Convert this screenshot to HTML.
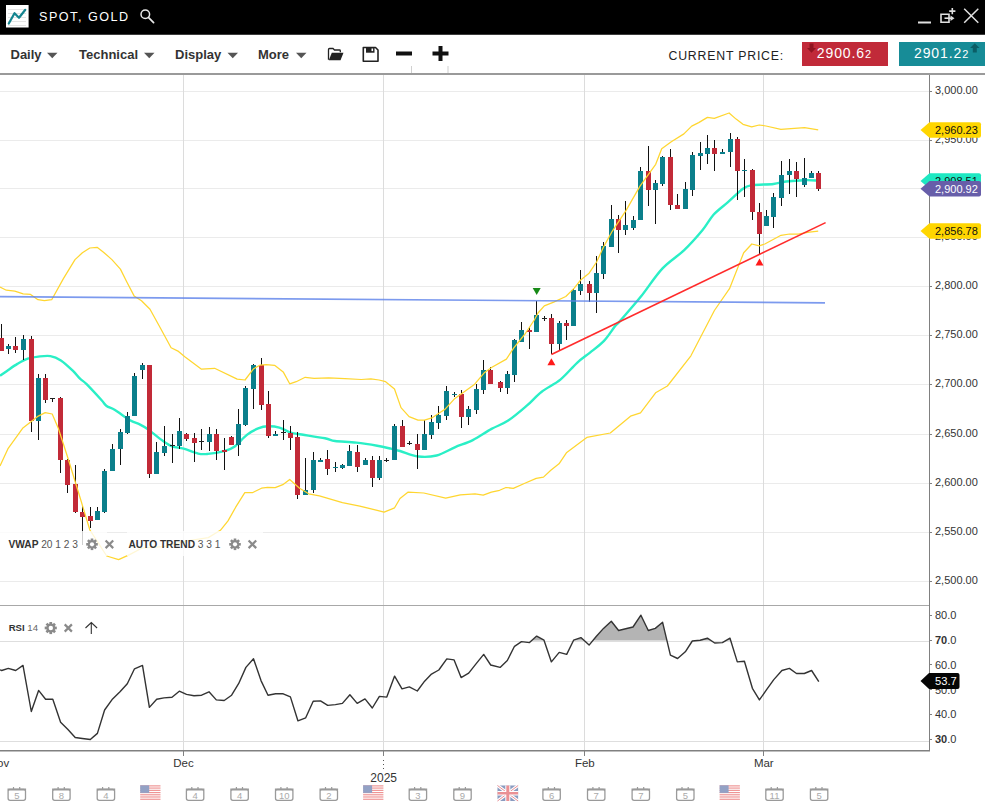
<!DOCTYPE html>
<html><head><meta charset="utf-8">
<style>
html,body{margin:0;padding:0;}
body{width:985px;height:805px;overflow:hidden;background:#fff;position:relative;font-family:"Liberation Sans",sans-serif;}
.abs{position:absolute;}
svg{position:absolute;left:0;top:0;}
</style></head><body>

<svg width="985" height="805" viewBox="0 0 985 805" style="font-family:'Liberation Sans',sans-serif">
<rect x="0" y="0" width="985" height="34" fill="#000"/>
<rect x="0" y="34" width="985" height="1" fill="#3c3c3c"/>
<rect x="6" y="5" width="22.6" height="22.5" fill="#fff"/>
<rect x="8" y="9" width="18" height="1" fill="#e4e4e4"/>
<rect x="8" y="13" width="18" height="1" fill="#e4e4e4"/>
<rect x="8" y="17" width="18" height="1" fill="#e4e4e4"/>
<rect x="8" y="21" width="18" height="1" fill="#e4e4e4"/>
<rect x="8" y="25" width="18" height="1" fill="#e4e4e4"/>
<polyline points="8.8,23.5 14.5,13.2 19,17.8 25.3,9.8" fill="none" stroke="#14848f" stroke-width="2.2" stroke-linecap="round" stroke-linejoin="round"/>
<text x="39" y="21.4" fill="#fff" font-size="12.6" letter-spacing="1.5">SPOT, GOLD</text>
<circle cx="145.3" cy="14.2" r="4.3" fill="none" stroke="#e8e8e8" stroke-width="1.5"/>
<line x1="148.4" y1="17.4" x2="153.6" y2="22.6" stroke="#e8e8e8" stroke-width="1.7" stroke-linecap="round"/>
<rect x="918" y="21.5" width="13" height="2" fill="#e0e0e0"/>
<path d="M941,14.2 H949 V22.3 H941 Z" fill="none" stroke="#e0e0e0" stroke-width="1.6"/>
<path d="M944.5,18.2 H951" stroke="#e0e0e0" stroke-width="1.6"/>
<path d="M950.5,15.5 L954.5,18.2 L950.5,21 Z" fill="#e0e0e0"/>
<path d="M952.3,8 V14.2 M949.2,11.1 H955.4" stroke="#e0e0e0" stroke-width="1.6"/>
<path d="M964.2,8.7 L978.3,22.8 M978.3,8.7 L964.2,22.8" stroke="#e0e0e0" stroke-width="1.5"/>
<rect x="0" y="73" width="985" height="2" fill="#9a9a9a"/>
<text x="10.5" y="59.3" fill="#333" font-size="13" font-weight="bold">Daily</text>
<path d="M47,52.8 H57.5 L52.25,58.2 Z" fill="#555"/>
<text x="79" y="59.3" fill="#333" font-size="13" font-weight="bold">Technical</text>
<path d="M144,52.8 H154.5 L149.25,58.2 Z" fill="#555"/>
<text x="175" y="59.3" fill="#333" font-size="13" font-weight="bold">Display</text>
<path d="M227.5,52.8 H238.0 L232.75,58.2 Z" fill="#555"/>
<text x="258" y="59.3" fill="#333" font-size="13" font-weight="bold">More</text>
<path d="M296,52.8 H306.5 L301.25,58.2 Z" fill="#555"/>
<path d="M328.5,59.8 V49.5 Q328.5,48.5 329.5,48.5 H333 L334.5,50 H339.5 Q340.3,50 340.3,50.8 V52.3" fill="none" stroke="#222" stroke-width="1.3"/>
<path d="M328.8,60.2 L331.8,52.8 H343.5 L340.5,60.2 Z" fill="#222"/>
<path d="M363.3,47.5 H375.5 L378,50 V61.2 H363.3 Z" fill="none" stroke="#222" stroke-width="1.6" stroke-linejoin="round"/>
<rect x="366" y="47.5" width="8.5" height="5.2" fill="#222"/>
<rect x="371.5" y="48.5" width="1.6" height="2.6" fill="#fff"/>
<rect x="396" y="51.5" width="16" height="4" fill="#111"/>
<rect x="432.5" y="51.5" width="16" height="4" fill="#111"/>
<rect x="438.5" y="46" width="4" height="15" fill="#111"/>
<rect x="411" y="66" width="1" height="7" fill="#d0d0d0"/>
<rect x="447.5" y="66" width="1" height="7" fill="#d0d0d0"/>
<text x="668.5" y="59.9" fill="#222" font-size="12.3" letter-spacing="0.8">CURRENT PRICE:</text>
<rect x="802" y="42" width="86" height="24" fill="#c12a39"/>
<path d="M809.5,43.5 H813.5 V48 H816 L811.5,52.8 L807,48 H809.5 Z" fill="#8f1420"/>
<text x="816.8" y="57.8" fill="#fff" font-size="14" letter-spacing="0.9">2900.6<tspan font-size="11">2</tspan></text>
<rect x="899" y="42" width="86" height="24" fill="#178c97"/>
<path d="M972.8,52.5 H976.8 V48 H979.5 L974.8,43.2 L970.1,48 H972.8 Z" fill="#0b5e66"/>
<text x="914" y="57.8" fill="#fff" font-size="14" letter-spacing="0.9">2901.2<tspan font-size="11">2</tspan></text>
<rect x="0" y="91" width="929" height="1" fill="#ebebeb"/>
<rect x="0" y="140" width="929" height="1" fill="#ebebeb"/>
<rect x="0" y="188" width="929" height="1" fill="#ebebeb"/>
<rect x="0" y="237" width="929" height="1" fill="#ebebeb"/>
<rect x="0" y="286" width="929" height="1" fill="#ebebeb"/>
<rect x="0" y="335" width="929" height="1" fill="#ebebeb"/>
<rect x="0" y="384" width="929" height="1" fill="#ebebeb"/>
<rect x="0" y="434" width="929" height="1" fill="#ebebeb"/>
<rect x="0" y="483" width="929" height="1" fill="#ebebeb"/>
<rect x="0" y="532" width="929" height="1" fill="#ebebeb"/>
<rect x="0" y="581" width="929" height="1" fill="#ebebeb"/>
<rect x="183" y="75" width="1" height="675" fill="#dcdcdc"/>
<rect x="383" y="75" width="1" height="675" fill="#dcdcdc"/>
<rect x="584" y="75" width="1" height="675" fill="#dcdcdc"/>
<rect x="763" y="75" width="1" height="675" fill="#dcdcdc"/>
<rect x="0" y="641" width="929" height="1" fill="#dedede"/>
<rect x="0" y="741" width="929" height="1" fill="#dedede"/>
<rect x="0" y="605" width="929" height="1" fill="#a8a8a8"/>
<rect x="929" y="75" width="1" height="676" fill="#808080"/>
<rect x="0" y="750" width="930" height="1.5" fill="#808080"/>
<path d="M0,375.7 C1.2,374.9 4.1,372.9 7,370.9 C9.9,368.9 13.9,365.9 17.4,363.9 C20.9,361.9 24.3,359.9 27.8,358.7 C31.3,357.5 34.5,357 38.3,356.6 C42.1,356.2 46.6,355.5 50.4,356.1 C54.2,356.7 57.1,357.9 60.9,360.4 C64.7,362.9 69.8,367.8 73,370.9 C76.2,373.9 77.7,376.5 80,378.7 C82.3,380.9 83,380.6 86.6,384.2 C90.2,387.8 98.1,396.4 101.4,400 C104.7,403.6 104.3,404.3 106.6,406 C108.9,407.7 111.1,407.6 115,410 C118.9,412.4 125.9,417.9 130,420.3 C134.1,422.7 136.7,422.9 139.7,424.4 C142.7,425.9 144.1,426.5 147.9,429.2 C151.7,431.9 158.4,437.8 162.5,440.6 C166.6,443.5 168.7,445 172.2,446.3 C175.7,447.6 179.3,447.5 183.6,448.7 C187.9,449.9 194.1,452.7 198.2,453.6 C202.2,454.5 203.6,454.3 207.9,453.9 C212.2,453.5 219.9,452.2 224.2,451.1 C228.5,450 230.1,449.8 233.9,447.1 C237.7,444.4 242.9,438 246.9,434.9 C250.9,431.8 254.7,429.8 258.2,428.4 C261.7,427 264.5,426.4 268,426.3 C271.5,426.2 275.7,426.6 279.4,427.6 C283.1,428.6 286.9,431.4 290,432.5 C293.1,433.6 292.1,433 297.9,434 C303.7,435 318.8,437.1 325,438.3 C331.2,439.5 329.8,440.3 335,441 C340.2,441.7 349.3,441.8 356.3,442.6 C363.3,443.4 371.4,444.7 377.2,445.7 C383,446.7 387.2,447.8 391,448.7 C394.8,449.6 395.4,449.7 400,451 C404.6,452.3 412.2,455.8 418.3,456.5 C424.4,457.2 430.5,457 436.6,455.5 C442.7,454 448.8,449.9 454.8,447.3 C460.8,444.7 466.7,443.2 472.8,440.1 C478.9,437 485.6,432.1 491.5,428.9 C497.4,425.6 502.3,424.5 508.2,420.6 C514.1,416.7 521.2,410.5 526.8,405.7 C532.4,400.9 536.1,396 541.7,391.7 C547.3,387.4 554.5,384.4 560.4,379.6 C566.3,374.8 572.2,367.3 577.1,362.8 C582,358.3 585.5,356.2 590,352.6 C594.5,349 599.8,345.3 604,340.9 C608.2,336.5 612.3,329.7 615,326.3 C617.7,322.9 616.1,325.5 620.4,320.6 C624.6,315.7 633.5,305.8 640.5,297.1 C647.5,288.4 655,276.4 662.3,268.6 C669.6,260.8 677.5,256.5 684.2,250.1 C690.9,243.7 697.7,235.9 702.6,230 C707.5,224.1 709.4,219.4 713.5,214.8 C717.6,210.2 722.5,206.9 727.4,202.6 C732.3,198.2 739,191.6 743,188.7 C747,185.8 746.6,186 751.7,185.2 C756.8,184.4 767.8,184.6 773.5,184 C779.2,183.4 780.7,182.1 785.9,181.5 C791.1,180.9 799.2,180.3 804.5,180.2 C809.8,180 815.4,180.5 817.6,180.6" fill="none" stroke="#2aefc6" stroke-width="2.4" stroke-linejoin="round"/>
<rect x="1" y="324" width="1" height="27" fill="#111"/>
<rect x="-1" y="338" width="5" height="13" fill="#c22a38"/>
<rect x="8" y="344" width="1" height="10" fill="#111"/>
<rect x="6" y="346" width="5" height="3" fill="#0b7f8b"/>
<rect x="15" y="337" width="1" height="16" fill="#111"/>
<rect x="13" y="346" width="5" height="4" fill="#c22a38"/>
<rect x="23" y="335" width="1" height="25" fill="#111"/>
<rect x="21" y="339" width="5" height="11" fill="#0b7f8b"/>
<rect x="31" y="336" width="1" height="96" fill="#111"/>
<rect x="29" y="339" width="5" height="82" fill="#c22a38"/>
<rect x="38" y="374" width="1" height="66" fill="#111"/>
<rect x="36" y="378" width="5" height="43" fill="#0b7f8b"/>
<rect x="45" y="374" width="1" height="29" fill="#111"/>
<rect x="43" y="378" width="5" height="22" fill="#c22a38"/>
<rect x="52" y="398" width="1" height="4" fill="#111"/>
<rect x="50" y="398" width="5" height="1" fill="#222"/>
<rect x="60" y="397" width="1" height="76" fill="#111"/>
<rect x="58" y="398" width="5" height="62" fill="#c22a38"/>
<rect x="67" y="459" width="1" height="34" fill="#111"/>
<rect x="65" y="460" width="5" height="25" fill="#c22a38"/>
<rect x="75" y="465" width="1" height="48" fill="#111"/>
<rect x="73" y="484" width="5" height="28" fill="#c22a38"/>
<rect x="82" y="506" width="1" height="39" fill="#111"/>
<rect x="80" y="512" width="5" height="5" fill="#c22a38"/>
<rect x="90" y="507" width="1" height="21" fill="#111"/>
<rect x="88" y="516" width="5" height="5" fill="#c22a38"/>
<rect x="97" y="507" width="1" height="13" fill="#111"/>
<rect x="95" y="511" width="5" height="9" fill="#0b7f8b"/>
<rect x="104" y="469" width="1" height="44" fill="#111"/>
<rect x="102" y="471" width="5" height="41" fill="#0b7f8b"/>
<rect x="112" y="444" width="1" height="27" fill="#111"/>
<rect x="110" y="449" width="5" height="22" fill="#0b7f8b"/>
<rect x="120" y="429" width="1" height="36" fill="#111"/>
<rect x="118" y="432" width="5" height="17" fill="#0b7f8b"/>
<rect x="127" y="412" width="1" height="22" fill="#111"/>
<rect x="125" y="416" width="5" height="17" fill="#0b7f8b"/>
<rect x="134" y="373" width="1" height="43" fill="#111"/>
<rect x="132" y="376" width="5" height="40" fill="#0b7f8b"/>
<rect x="142" y="363" width="1" height="16" fill="#111"/>
<rect x="140" y="365" width="5" height="5" fill="#0b7f8b"/>
<rect x="149" y="365" width="1" height="113" fill="#111"/>
<rect x="147" y="365" width="5" height="109" fill="#c22a38"/>
<rect x="156" y="442" width="1" height="32" fill="#111"/>
<rect x="154" y="452" width="5" height="22" fill="#0b7f8b"/>
<rect x="164" y="426" width="1" height="30" fill="#111"/>
<rect x="162" y="446" width="5" height="7" fill="#0b7f8b"/>
<rect x="172" y="434" width="1" height="29" fill="#111"/>
<rect x="170" y="445" width="5" height="1" fill="#222"/>
<rect x="179" y="418" width="1" height="31" fill="#111"/>
<rect x="177" y="431" width="5" height="15" fill="#0b7f8b"/>
<rect x="186" y="433" width="1" height="8" fill="#111"/>
<rect x="184" y="434" width="5" height="5" fill="#c22a38"/>
<rect x="194" y="433" width="1" height="29" fill="#111"/>
<rect x="192" y="438" width="5" height="5" fill="#c22a38"/>
<rect x="201" y="429" width="1" height="21" fill="#111"/>
<rect x="199" y="441" width="5" height="1" fill="#222"/>
<rect x="209" y="427" width="1" height="24" fill="#111"/>
<rect x="207" y="434" width="5" height="8" fill="#0b7f8b"/>
<rect x="216" y="429" width="1" height="31" fill="#111"/>
<rect x="214" y="434" width="5" height="17" fill="#c22a38"/>
<rect x="224" y="438" width="1" height="32" fill="#111"/>
<rect x="222" y="450" width="5" height="2" fill="#c22a38"/>
<rect x="231" y="436" width="1" height="9" fill="#111"/>
<rect x="229" y="437" width="5" height="8" fill="#c22a38"/>
<rect x="238" y="409" width="1" height="47" fill="#111"/>
<rect x="236" y="424" width="5" height="21" fill="#0b7f8b"/>
<rect x="245" y="386" width="1" height="40" fill="#111"/>
<rect x="243" y="388" width="5" height="37" fill="#0b7f8b"/>
<rect x="253" y="364" width="1" height="45" fill="#111"/>
<rect x="251" y="365" width="5" height="24" fill="#0b7f8b"/>
<rect x="261" y="358" width="1" height="52" fill="#111"/>
<rect x="259" y="365" width="5" height="40" fill="#c22a38"/>
<rect x="268" y="391" width="1" height="47" fill="#111"/>
<rect x="266" y="404" width="5" height="32" fill="#c22a38"/>
<rect x="275" y="431" width="1" height="5" fill="#111"/>
<rect x="273" y="434" width="5" height="2" fill="#0b7f8b"/>
<rect x="283" y="420" width="1" height="20" fill="#111"/>
<rect x="281" y="432" width="5" height="1" fill="#222"/>
<rect x="290" y="426" width="1" height="24" fill="#111"/>
<rect x="288" y="433" width="5" height="5" fill="#c22a38"/>
<rect x="297" y="432" width="1" height="67" fill="#111"/>
<rect x="295" y="437" width="5" height="58" fill="#c22a38"/>
<rect x="305" y="458" width="1" height="37" fill="#111"/>
<rect x="303" y="490" width="5" height="5" fill="#0b7f8b"/>
<rect x="313" y="452" width="1" height="41" fill="#111"/>
<rect x="311" y="460" width="5" height="30" fill="#0b7f8b"/>
<rect x="320" y="458" width="1" height="4" fill="#111"/>
<rect x="318" y="460" width="5" height="2" fill="#0b7f8b"/>
<rect x="327" y="450" width="1" height="25" fill="#111"/>
<rect x="325" y="459" width="5" height="10" fill="#c22a38"/>
<rect x="335" y="462" width="1" height="10" fill="#111"/>
<rect x="333" y="467" width="5" height="1" fill="#0b7f8b"/>
<rect x="342" y="464" width="1" height="5" fill="#111"/>
<rect x="340" y="465" width="5" height="3" fill="#0b7f8b"/>
<rect x="349" y="445" width="1" height="21" fill="#111"/>
<rect x="347" y="451" width="5" height="15" fill="#0b7f8b"/>
<rect x="357" y="445" width="1" height="27" fill="#111"/>
<rect x="355" y="452" width="5" height="15" fill="#c22a38"/>
<rect x="365" y="458" width="1" height="7" fill="#111"/>
<rect x="363" y="460" width="5" height="5" fill="#0b7f8b"/>
<rect x="372" y="456" width="1" height="31" fill="#111"/>
<rect x="370" y="460" width="5" height="18" fill="#c22a38"/>
<rect x="379" y="456" width="1" height="24" fill="#111"/>
<rect x="377" y="460" width="5" height="18" fill="#0b7f8b"/>
<rect x="386" y="458" width="1" height="4" fill="#111"/>
<rect x="384" y="460" width="5" height="1" fill="#222"/>
<rect x="394" y="424" width="1" height="36" fill="#111"/>
<rect x="392" y="426" width="5" height="34" fill="#0b7f8b"/>
<rect x="402" y="420" width="1" height="27" fill="#111"/>
<rect x="400" y="426" width="5" height="21" fill="#c22a38"/>
<rect x="409" y="441" width="1" height="4" fill="#111"/>
<rect x="407" y="443" width="5" height="1" fill="#222"/>
<rect x="417" y="434" width="1" height="35" fill="#111"/>
<rect x="415" y="444" width="5" height="6" fill="#c22a38"/>
<rect x="424" y="420" width="1" height="30" fill="#111"/>
<rect x="422" y="434" width="5" height="16" fill="#0b7f8b"/>
<rect x="431" y="415" width="1" height="24" fill="#111"/>
<rect x="429" y="422" width="5" height="13" fill="#0b7f8b"/>
<rect x="438" y="406" width="1" height="23" fill="#111"/>
<rect x="436" y="415" width="5" height="8" fill="#0b7f8b"/>
<rect x="446" y="386" width="1" height="34" fill="#111"/>
<rect x="444" y="391" width="5" height="25" fill="#0b7f8b"/>
<rect x="454" y="392" width="1" height="5" fill="#111"/>
<rect x="452" y="394" width="5" height="1" fill="#0b7f8b"/>
<rect x="461" y="390" width="1" height="38" fill="#111"/>
<rect x="459" y="394" width="5" height="23" fill="#c22a38"/>
<rect x="468" y="406" width="1" height="19" fill="#111"/>
<rect x="466" y="409" width="5" height="8" fill="#0b7f8b"/>
<rect x="476" y="384" width="1" height="30" fill="#111"/>
<rect x="474" y="389" width="5" height="21" fill="#0b7f8b"/>
<rect x="483" y="360" width="1" height="34" fill="#111"/>
<rect x="481" y="370" width="5" height="20" fill="#0b7f8b"/>
<rect x="490" y="367" width="1" height="17" fill="#111"/>
<rect x="488" y="370" width="5" height="14" fill="#c22a38"/>
<rect x="500" y="381" width="1" height="11" fill="#111"/>
<rect x="498" y="382" width="5" height="6" fill="#c22a38"/>
<rect x="507" y="371" width="1" height="23" fill="#111"/>
<rect x="505" y="374" width="5" height="14" fill="#0b7f8b"/>
<rect x="514" y="339" width="1" height="43" fill="#111"/>
<rect x="512" y="340" width="5" height="35" fill="#0b7f8b"/>
<rect x="521" y="322" width="1" height="20" fill="#111"/>
<rect x="519" y="330" width="5" height="12" fill="#0b7f8b"/>
<rect x="529" y="327" width="1" height="22" fill="#111"/>
<rect x="527" y="330" width="5" height="2" fill="#c22a38"/>
<rect x="536" y="301" width="1" height="31" fill="#111"/>
<rect x="534" y="315" width="5" height="17" fill="#0b7f8b"/>
<rect x="544" y="316" width="1" height="5" fill="#111"/>
<rect x="542" y="318" width="5" height="1" fill="#222"/>
<rect x="551" y="314" width="1" height="40" fill="#111"/>
<rect x="549" y="318" width="5" height="26" fill="#c22a38"/>
<rect x="559" y="321" width="1" height="30" fill="#111"/>
<rect x="557" y="323" width="5" height="21" fill="#0b7f8b"/>
<rect x="566" y="320" width="1" height="20" fill="#111"/>
<rect x="564" y="323" width="5" height="3" fill="#c22a38"/>
<rect x="573" y="289" width="1" height="37" fill="#111"/>
<rect x="571" y="290" width="5" height="36" fill="#0b7f8b"/>
<rect x="580" y="270" width="1" height="25" fill="#111"/>
<rect x="578" y="284" width="5" height="7" fill="#0b7f8b"/>
<rect x="589" y="281" width="1" height="21" fill="#111"/>
<rect x="587" y="284" width="5" height="9" fill="#c22a38"/>
<rect x="596" y="256" width="1" height="57" fill="#111"/>
<rect x="594" y="273" width="5" height="20" fill="#0b7f8b"/>
<rect x="603" y="242" width="1" height="37" fill="#111"/>
<rect x="601" y="246" width="5" height="28" fill="#0b7f8b"/>
<rect x="611" y="205" width="1" height="42" fill="#111"/>
<rect x="609" y="219" width="5" height="28" fill="#0b7f8b"/>
<rect x="618" y="215" width="1" height="38" fill="#111"/>
<rect x="616" y="219" width="5" height="11" fill="#c22a38"/>
<rect x="625" y="201" width="1" height="34" fill="#111"/>
<rect x="623" y="225" width="5" height="5" fill="#0b7f8b"/>
<rect x="633" y="216" width="1" height="14" fill="#111"/>
<rect x="631" y="220" width="5" height="8" fill="#0b7f8b"/>
<rect x="640" y="167" width="1" height="53" fill="#111"/>
<rect x="638" y="171" width="5" height="49" fill="#0b7f8b"/>
<rect x="648" y="146" width="1" height="60" fill="#111"/>
<rect x="646" y="171" width="5" height="19" fill="#c22a38"/>
<rect x="655" y="180" width="1" height="44" fill="#111"/>
<rect x="653" y="183" width="5" height="7" fill="#0b7f8b"/>
<rect x="662" y="156" width="1" height="30" fill="#111"/>
<rect x="660" y="157" width="5" height="27" fill="#0b7f8b"/>
<rect x="670" y="149" width="1" height="61" fill="#111"/>
<rect x="668" y="157" width="5" height="48" fill="#c22a38"/>
<rect x="677" y="194" width="1" height="15" fill="#111"/>
<rect x="675" y="205" width="5" height="4" fill="#c22a38"/>
<rect x="685" y="182" width="1" height="27" fill="#111"/>
<rect x="683" y="189" width="5" height="20" fill="#0b7f8b"/>
<rect x="692" y="152" width="1" height="44" fill="#111"/>
<rect x="690" y="155" width="5" height="35" fill="#0b7f8b"/>
<rect x="700" y="142" width="1" height="28" fill="#111"/>
<rect x="698" y="153" width="5" height="3" fill="#0b7f8b"/>
<rect x="707" y="135" width="1" height="29" fill="#111"/>
<rect x="705" y="148" width="5" height="6" fill="#0b7f8b"/>
<rect x="714" y="140" width="1" height="31" fill="#111"/>
<rect x="712" y="148" width="5" height="6" fill="#c22a38"/>
<rect x="722" y="149" width="1" height="5" fill="#111"/>
<rect x="720" y="152" width="5" height="2" fill="#0b7f8b"/>
<rect x="730" y="133" width="1" height="34" fill="#111"/>
<rect x="728" y="139" width="5" height="13" fill="#0b7f8b"/>
<rect x="737" y="137" width="1" height="63" fill="#111"/>
<rect x="735" y="139" width="5" height="32" fill="#c22a38"/>
<rect x="744" y="159" width="1" height="38" fill="#111"/>
<rect x="742" y="170" width="5" height="1" fill="#0b7f8b"/>
<rect x="752" y="169" width="1" height="51" fill="#111"/>
<rect x="750" y="170" width="5" height="42" fill="#c22a38"/>
<rect x="759" y="203" width="1" height="51" fill="#111"/>
<rect x="757" y="212" width="5" height="22" fill="#c22a38"/>
<rect x="766" y="210" width="1" height="16" fill="#111"/>
<rect x="764" y="216" width="5" height="10" fill="#0b7f8b"/>
<rect x="773" y="193" width="1" height="35" fill="#111"/>
<rect x="771" y="197" width="5" height="20" fill="#0b7f8b"/>
<rect x="781" y="161" width="1" height="45" fill="#111"/>
<rect x="779" y="175" width="5" height="23" fill="#0b7f8b"/>
<rect x="789" y="159" width="1" height="35" fill="#111"/>
<rect x="787" y="171" width="5" height="4" fill="#0b7f8b"/>
<rect x="796" y="162" width="1" height="35" fill="#111"/>
<rect x="794" y="171" width="5" height="8" fill="#c22a38"/>
<rect x="804" y="158" width="1" height="29" fill="#111"/>
<rect x="802" y="178" width="5" height="7" fill="#0b7f8b"/>
<rect x="811" y="171" width="1" height="7" fill="#111"/>
<rect x="809" y="173" width="5" height="5" fill="#0b7f8b"/>
<rect x="818" y="171" width="1" height="20" fill="#111"/>
<rect x="816" y="173" width="5" height="16" fill="#c22a38"/>
<polyline points="0,287 6.3,290.2 14.8,291.2 23.2,293.8 30.6,294.4 38,299.7 44.4,300.7 51.7,299.7 63.4,278.6 75,259.6 82.4,252.8 89.8,248 97.1,247.3 103.5,252.2 111.9,259.6 120.4,269.1 126.7,281.7 134.1,295.9 141.5,300.7 150,309.2 160.5,328.2 171.1,347.8 178.5,351.4 184.8,356.7 201.5,369.2 214.6,368.3 237.2,379.1 245,380 253.7,368.7 259.8,365.2 266.2,364.6 274.6,365.3 283.2,371.9 289.7,383.8 296.2,381.7 305.2,377.3 314.1,378.4 328.7,377.9 344.9,378.7 361.2,379.5 370.9,378.9 379,380 385.6,381.7 394.5,389 401,407.6 409.1,416.6 418,420.1 424.5,420.1 431.8,417.9 440,412.5 444.9,409.4 454.2,399.1 474.7,384.2 484,373.1 491.5,367.5 506.4,359.1 513.8,347.9 525,334 534.3,320 538,313 544.3,305.8 553.7,302.1 565.8,296.5 574.2,288.1 580.7,280 589.1,273.2 596.6,262 604,246.1 612.2,231.3 626.1,210.4 640,186.1 655.7,164.3 661.7,148.7 671.3,141.7 683.9,133.9 691.7,126.1 698.7,122.6 707.4,117.4 714.3,118.3 729.1,113 736.1,119.1 743,124.3 751.7,126.8 759.2,125 766,126 780.9,129.3 804.5,127.7 818.2,129.9" fill="none" stroke="#ffd630" stroke-width="1.25" stroke-linejoin="round"/>
<polyline points="0,466 8.2,448.3 22.6,428.3 38.3,416.1 45.2,412.6 52.2,414 58.3,428.3 68.3,459.2 79.2,494.8 89.8,529.8 106.7,556 118.6,559.6 129.6,554.6 142.1,548 163.9,546.7 185.8,541.2 208.3,537.6 220.4,530.3 228,520.9 235.7,507.2 244.8,492.7 252.4,492.7 261.5,488.2 267.6,487.4 275.2,487.7 282.8,484.7 289.7,479.5 299.6,488.2 308.7,493.8 319.4,495.8 342.4,502.6 359.8,506.1 377.2,510.4 384.1,512.2 394.6,507.8 400,498.5 408.2,492.1 423.8,493 445.7,498.1 460.3,494.8 475,493.9 483.2,495.2 491.4,492.1 499.6,490.3 506,487.5 513.3,488.4 524.3,483.5 536.2,478.4 543.5,477.1 550.8,470.2 559,463.8 566.4,452.8 586.8,437.4 610.3,433 630.5,416.2 640.5,412.9 655.6,392.8 667.4,386 690.9,355.8 714.4,310.5 729.5,288.7 743.7,252.7 751.8,244 759.2,245.8 764.8,244 781,235.3 789.6,234 798.3,234 809.5,232.2 818.2,231.2" fill="none" stroke="#ffd630" stroke-width="1.25" stroke-linejoin="round"/>
<line x1="0" y1="296.6" x2="825" y2="302.9" stroke="#5f84ea" stroke-opacity="0.82" stroke-width="1.7"/>
<line x1="551.4" y1="354.5" x2="825.6" y2="222.6" stroke="#ff2b2b" stroke-width="1.6"/>
<path d="M532.7,288 H540.7 L536.7,295 Z" fill="#178a17"/>
<path d="M547.4,365.3 H555.4 L551.4,358.2 Z" fill="#ff1a1a"/>
<path d="M755.5,265.6 H763.5 L759.5,258.6 Z" fill="#ff1a1a"/>
<rect x="929" y="91" width="3" height="1" fill="#808080"/>
<text x="935" y="93.9" fill="#333" font-size="11">3,000.00</text>
<rect x="929" y="140" width="3" height="1" fill="#808080"/>
<text x="935" y="142.9" fill="#333" font-size="11">2,950.00</text>
<rect x="929" y="188" width="3" height="1" fill="#808080"/>
<text x="935" y="190.9" fill="#333" font-size="11">2,900.00</text>
<rect x="929" y="237" width="3" height="1" fill="#808080"/>
<text x="935" y="239.9" fill="#333" font-size="11">2,850.00</text>
<rect x="929" y="286" width="3" height="1" fill="#808080"/>
<text x="935" y="288.9" fill="#333" font-size="11">2,800.00</text>
<rect x="929" y="335" width="3" height="1" fill="#808080"/>
<text x="935" y="337.9" fill="#333" font-size="11">2,750.00</text>
<rect x="929" y="384" width="3" height="1" fill="#808080"/>
<text x="935" y="386.9" fill="#333" font-size="11">2,700.00</text>
<rect x="929" y="434" width="3" height="1" fill="#808080"/>
<text x="935" y="436.9" fill="#333" font-size="11">2,650.00</text>
<rect x="929" y="483" width="3" height="1" fill="#808080"/>
<text x="935" y="485.9" fill="#333" font-size="11">2,600.00</text>
<rect x="929" y="532" width="3" height="1" fill="#808080"/>
<text x="935" y="534.9" fill="#333" font-size="11">2,550.00</text>
<rect x="929" y="581" width="3" height="1" fill="#808080"/>
<text x="935" y="583.9" fill="#333" font-size="11">2,500.00</text>
<rect x="929" y="615" width="3" height="1" fill="#808080"/>
<text x="935" y="619.1" fill="#333" font-size="11">80.0</text>
<rect x="929" y="640" width="3" height="1" fill="#808080"/>
<text x="935" y="644" fill="#333" font-size="11"><tspan font-weight="bold">70</tspan>.0</text>
<rect x="929" y="664" width="3" height="1" fill="#808080"/>
<text x="935" y="668.8" fill="#333" font-size="11">60.0</text>
<rect x="929" y="689" width="3" height="1" fill="#808080"/>
<text x="935" y="693.6" fill="#333" font-size="11">50.0</text>
<rect x="929" y="714" width="3" height="1" fill="#808080"/>
<text x="935" y="718.4" fill="#333" font-size="11">40.0</text>
<rect x="929" y="739" width="3" height="1" fill="#808080"/>
<text x="935" y="743.2" fill="#333" font-size="11"><tspan font-weight="bold">30</tspan>.0</text>
<path d="M920.5,130 L929.5,122.2 H979 Q981,122.2 981,124.2 V135.8 Q981,137.8 979,137.8 H929.5 Z" fill="#ffd600"/>
<text x="935" y="134" fill="#111" font-size="11">2,960.23</text>
<path d="M920.5,181 L929.5,173.2 H979 Q981,173.2 981,175.2 V186.8 Q981,188.8 979,188.8 H929.5 Z" fill="#1ee8c2"/>
<text x="935" y="185" fill="#111" font-size="11">2,908.51</text>
<path d="M920.5,188.7 L929.5,180.9 H979 Q981,180.9 981,182.9 V194.5 Q981,196.5 979,196.5 H929.5 Z" fill="#675ea9"/>
<text x="935" y="192.7" fill="#fff" font-size="11">2,900.92</text>
<path d="M920.5,231 L929.5,223.2 H979 Q981,223.2 981,225.2 V236.8 Q981,238.8 979,238.8 H929.5 Z" fill="#ffd600"/>
<text x="935" y="235" fill="#111" font-size="11">2,856.78</text>
<polygon points="531.8,640.5 536.7,636.1 544,640.2 544.1,640.5" fill="#b4b4b4"/>
<polygon points="573.5,640.5 573.6,640.2 580.9,637.6 584.1,640.5" fill="#b4b4b4"/>
<polygon points="592.9,640.5 596.2,636.5 603.5,628.4 611.3,621.3 618.6,630.5 625.7,628.8 633,627 640.9,615.2 648.3,630.5 655.3,628.4 662.6,622.3 666.9,640.5" fill="#b4b4b4"/>
<polygon points="697.2,640.5 700.1,640.2 707.4,638.2 710.9,640.5" fill="#b4b4b4"/>
<polygon points="726,640.5 730,638.2 730.7,640.5" fill="#b4b4b4"/>
<polyline points="0,669.8 1.7,670.5 8.3,668.4 15.7,670.5 23,665.4 31.3,711.5 38.6,690.4 45.6,699.3 52.8,699.3 60.6,722.2 67.7,729.3 75.2,737.5 82.3,738.5 90.3,739.5 97.4,733.4 104.6,710 112.6,698.9 120,691.8 127.3,683.7 134.5,668.8 142.5,665.4 149.4,707.4 156.7,699.3 164,697.9 172,697.3 179.3,691.2 186.5,694.4 194,695.8 201.6,695.2 209,691.8 216.3,699.9 224.2,700.5 231.6,695.2 238.6,683.7 245.9,667.4 253.5,658.7 261,680.6 268,695.2 275.6,693.8 283.2,693.8 290.4,696.9 297.9,720.8 305.7,717.8 313.2,701.3 320.5,700.9 327.7,705.4 335.4,704.6 342.4,703.4 349.9,694.8 357.2,703.4 365,698.9 372.3,708 379.4,696.4 386.8,697.1 394.6,676.1 402,688.9 409.3,686.9 417.3,691 424.6,681.2 431.5,674.1 438.8,670 446.8,658.9 454.1,659.9 461.1,677.6 468.7,673.1 476.4,663.4 483.7,654.4 490.7,665 500.1,667.4 507.3,660.5 514.5,646.3 521.5,641.6 529.5,642.6 536.7,636.1 544,640.2 551.4,661.9 559.2,652.4 566.7,654.4 573.6,640.2 580.9,637.6 589.1,645.1 596.2,636.5 603.5,628.4 611.3,621.3 618.6,630.5 625.7,628.8 633,627 640.9,615.2 648.3,630.5 655.3,628.4 662.6,622.3 670.4,655.2 677.6,658.5 685.3,651.8 692.3,641 700.1,640.2 707.4,638.2 714.7,643 722.4,642.6 730,638.2 737.3,661.9 744.4,661.3 752.4,688.3 759.4,699.9 766.6,689.7 773.8,679.6 781.9,670.5 789.4,668.4 796.5,673.5 804.3,673.5 811.6,670.5 818.8,681.6" fill="none" stroke="#333" stroke-width="1.4" stroke-linejoin="round"/>
<path d="M920.5,681 L929,673 H957.5 Q959.5,673 959.5,675 V687 Q959.5,689 957.5,689 H929 Z" fill="#050505"/>
<text x="935" y="685.2" fill="#fff" font-size="11.2">53.7</text>
<rect x="0" y="531" width="107" height="25" fill="#fff" fill-opacity="0.8"/>
<rect x="127" y="531" width="136" height="25" fill="#fff" fill-opacity="0.8"/>
<text x="8.5" y="547.6" fill="#333" font-size="10.2" font-weight="bold">VWAP <tspan font-weight="normal" fill="#555">20 1 2 3</tspan></text>
<g transform="translate(92,544.3)" fill="#8a8a8a">
<circle r="4.3"/>
<rect x="-1.3" y="-5.8" width="2.6" height="11.6" transform="rotate(0)"/>
<rect x="-1.3" y="-5.8" width="2.6" height="11.6" transform="rotate(45)"/>
<rect x="-1.3" y="-5.8" width="2.6" height="11.6" transform="rotate(90)"/>
<rect x="-1.3" y="-5.8" width="2.6" height="11.6" transform="rotate(135)"/>
<circle r="2.1" fill="#fff"/>
</g>
<path d="M105.6,540.5 L113.2,548.1 M113.2,540.5 L105.6,548.1" stroke="#8a8a8a" stroke-width="2.2"/>
<text x="128.4" y="547.6" fill="#333" font-size="10.2" font-weight="bold">AUTO TREND <tspan font-weight="normal" fill="#555">3 3 1</tspan></text>
<g transform="translate(235,544.3)" fill="#8a8a8a">
<circle r="4.3"/>
<rect x="-1.3" y="-5.8" width="2.6" height="11.6" transform="rotate(0)"/>
<rect x="-1.3" y="-5.8" width="2.6" height="11.6" transform="rotate(45)"/>
<rect x="-1.3" y="-5.8" width="2.6" height="11.6" transform="rotate(90)"/>
<rect x="-1.3" y="-5.8" width="2.6" height="11.6" transform="rotate(135)"/>
<circle r="2.1" fill="#fff"/>
</g>
<path d="M248.6,540.5 L256.2,548.1 M256.2,540.5 L248.6,548.1" stroke="#8a8a8a" stroke-width="2.2"/>
<text x="8.7" y="631.2" fill="#333" font-size="9.6" font-weight="bold">RSI <tspan font-weight="normal" fill="#666">14</tspan></text>
<g transform="translate(50.8,628)" fill="#8a8a8a">
<circle r="4.5"/>
<rect x="-1.4" y="-6" width="2.7" height="12.1" transform="rotate(0)"/>
<rect x="-1.4" y="-6" width="2.7" height="12.1" transform="rotate(45)"/>
<rect x="-1.4" y="-6" width="2.7" height="12.1" transform="rotate(90)"/>
<rect x="-1.4" y="-6" width="2.7" height="12.1" transform="rotate(135)"/>
<circle r="2.2" fill="#fff"/>
</g>
<path d="M64.7,624.4 L71.9,631.6 M71.9,624.4 L64.7,631.6" stroke="#8a8a8a" stroke-width="2.2"/>
<path d="M91.3,622.5 V634 M85.5,628 L91.3,622.5 L97.1,628" fill="none" stroke="#333" stroke-width="1.1"/>
<rect x="183" y="750" width="1" height="6" fill="#808080"/>
<rect x="383" y="750" width="1" height="6" fill="#808080"/>
<rect x="584" y="750" width="1" height="6" fill="#808080"/>
<rect x="763" y="750" width="1" height="6" fill="#808080"/>
<text x="-1" y="767" fill="#333" font-size="11.5" text-anchor="middle">Nov</text>
<text x="183.5" y="767" fill="#333" font-size="11.5" text-anchor="middle">Dec</text>
<text x="584.8" y="767" fill="#333" font-size="11.5" text-anchor="middle">Feb</text>
<text x="763.8" y="767" fill="#333" font-size="11.5" text-anchor="middle">Mar</text>
<rect x="383" y="760.0" width="1" height="1" fill="#555"/>
<rect x="383" y="764.0" width="1" height="1" fill="#555"/>
<rect x="383" y="768.0" width="1" height="1" fill="#555"/>
<text x="383.7" y="781.6" fill="#333" font-size="12" text-anchor="middle">2025</text>
<rect x="8.1" y="789.3" width="17.4" height="11" rx="2" ry="2" fill="none" stroke="#9a9a9a" stroke-width="1.3"/>
<rect x="7.5" y="788.5" width="18.6" height="2" fill="#9a9a9a"/>
<rect x="12.9" y="787" width="1.2" height="3" fill="#9a9a9a"/>
<rect x="19.1" y="787" width="1.2" height="3" fill="#9a9a9a"/>
<text x="16.8" y="798.8" fill="#aaa" font-size="9.5" text-anchor="middle">5</text>
<rect x="52.7" y="789.3" width="17.4" height="11" rx="2" ry="2" fill="none" stroke="#9a9a9a" stroke-width="1.3"/>
<rect x="52.1" y="788.5" width="18.6" height="2" fill="#9a9a9a"/>
<rect x="57.5" y="787" width="1.2" height="3" fill="#9a9a9a"/>
<rect x="63.7" y="787" width="1.2" height="3" fill="#9a9a9a"/>
<text x="61.4" y="798.8" fill="#aaa" font-size="9.5" text-anchor="middle">8</text>
<rect x="97.2" y="789.3" width="17.4" height="11" rx="2" ry="2" fill="none" stroke="#9a9a9a" stroke-width="1.3"/>
<rect x="96.6" y="788.5" width="18.6" height="2" fill="#9a9a9a"/>
<rect x="102" y="787" width="1.2" height="3" fill="#9a9a9a"/>
<rect x="108.2" y="787" width="1.2" height="3" fill="#9a9a9a"/>
<text x="105.9" y="798.8" fill="#aaa" font-size="9.5" text-anchor="middle">4</text>
<g opacity="0.55">
<rect x="140.2" y="785.3" width="20.3" height="1.15" fill="#e23b3b"/>
<rect x="140.2" y="787.5" width="20.3" height="1.15" fill="#e23b3b"/>
<rect x="140.2" y="789.8" width="20.3" height="1.15" fill="#e23b3b"/>
<rect x="140.2" y="792" width="20.3" height="1.15" fill="#e23b3b"/>
<rect x="140.2" y="794.2" width="20.3" height="1.15" fill="#e23b3b"/>
<rect x="140.2" y="796.4" width="20.3" height="1.15" fill="#e23b3b"/>
<rect x="140.2" y="798.7" width="20.3" height="1.15" fill="#e23b3b"/>
<rect x="140.2" y="785.3" width="9" height="7.6" fill="#3b5697"/>
</g>
<rect x="186.4" y="789.3" width="17.4" height="11" rx="2" ry="2" fill="none" stroke="#9a9a9a" stroke-width="1.3"/>
<rect x="185.8" y="788.5" width="18.6" height="2" fill="#9a9a9a"/>
<rect x="191.2" y="787" width="1.2" height="3" fill="#9a9a9a"/>
<rect x="197.4" y="787" width="1.2" height="3" fill="#9a9a9a"/>
<text x="195.1" y="798.8" fill="#aaa" font-size="9.5" text-anchor="middle">4</text>
<rect x="230.9" y="789.3" width="17.4" height="11" rx="2" ry="2" fill="none" stroke="#9a9a9a" stroke-width="1.3"/>
<rect x="230.3" y="788.5" width="18.6" height="2" fill="#9a9a9a"/>
<rect x="235.8" y="787" width="1.2" height="3" fill="#9a9a9a"/>
<rect x="241.9" y="787" width="1.2" height="3" fill="#9a9a9a"/>
<text x="239.7" y="798.8" fill="#aaa" font-size="9.5" text-anchor="middle">4</text>
<rect x="275.5" y="789.3" width="17.4" height="11" rx="2" ry="2" fill="none" stroke="#9a9a9a" stroke-width="1.3"/>
<rect x="274.9" y="788.5" width="18.6" height="2" fill="#9a9a9a"/>
<rect x="280.3" y="787" width="1.2" height="3" fill="#9a9a9a"/>
<rect x="286.5" y="787" width="1.2" height="3" fill="#9a9a9a"/>
<text x="284.2" y="798.8" fill="#aaa" font-size="9.5" text-anchor="middle">10</text>
<rect x="320.1" y="789.3" width="17.4" height="11" rx="2" ry="2" fill="none" stroke="#9a9a9a" stroke-width="1.3"/>
<rect x="319.5" y="788.5" width="18.6" height="2" fill="#9a9a9a"/>
<rect x="324.9" y="787" width="1.2" height="3" fill="#9a9a9a"/>
<rect x="331.1" y="787" width="1.2" height="3" fill="#9a9a9a"/>
<text x="328.8" y="798.8" fill="#aaa" font-size="9.5" text-anchor="middle">2</text>
<g opacity="0.55">
<rect x="363.1" y="785.3" width="20.3" height="1.15" fill="#e23b3b"/>
<rect x="363.1" y="787.5" width="20.3" height="1.15" fill="#e23b3b"/>
<rect x="363.1" y="789.8" width="20.3" height="1.15" fill="#e23b3b"/>
<rect x="363.1" y="792" width="20.3" height="1.15" fill="#e23b3b"/>
<rect x="363.1" y="794.2" width="20.3" height="1.15" fill="#e23b3b"/>
<rect x="363.1" y="796.4" width="20.3" height="1.15" fill="#e23b3b"/>
<rect x="363.1" y="798.7" width="20.3" height="1.15" fill="#e23b3b"/>
<rect x="363.1" y="785.3" width="9" height="7.6" fill="#3b5697"/>
</g>
<rect x="409.2" y="789.3" width="17.4" height="11" rx="2" ry="2" fill="none" stroke="#9a9a9a" stroke-width="1.3"/>
<rect x="408.6" y="788.5" width="18.6" height="2" fill="#9a9a9a"/>
<rect x="414" y="787" width="1.2" height="3" fill="#9a9a9a"/>
<rect x="420.2" y="787" width="1.2" height="3" fill="#9a9a9a"/>
<text x="417.9" y="798.8" fill="#aaa" font-size="9.5" text-anchor="middle">3</text>
<rect x="453.8" y="789.3" width="17.4" height="11" rx="2" ry="2" fill="none" stroke="#9a9a9a" stroke-width="1.3"/>
<rect x="453.2" y="788.5" width="18.6" height="2" fill="#9a9a9a"/>
<rect x="458.6" y="787" width="1.2" height="3" fill="#9a9a9a"/>
<rect x="464.8" y="787" width="1.2" height="3" fill="#9a9a9a"/>
<text x="462.5" y="798.8" fill="#aaa" font-size="9.5" text-anchor="middle">9</text>
<g opacity="0.55">
<rect x="497.5" y="785.5" width="20.6" height="15.5" fill="#2b4a8e"/>
<path d="M497.5,785.5 L518.1,801 M518.1,785.5 L497.5,801" stroke="#fff" stroke-width="3"/>
<path d="M497.5,785.5 L518.1,801 M518.1,785.5 L497.5,801" stroke="#d9363e" stroke-width="1"/>
<rect x="505.3" y="785.5" width="5" height="15.5" fill="#fff"/>
<rect x="497.5" y="791" width="20.6" height="4.5" fill="#fff"/>
<rect x="506.3" y="785.5" width="3" height="15.5" fill="#d9363e"/>
<rect x="497.5" y="792" width="20.6" height="2.5" fill="#d9363e"/>
</g>
<rect x="542.9" y="789.3" width="17.4" height="11" rx="2" ry="2" fill="none" stroke="#9a9a9a" stroke-width="1.3"/>
<rect x="542.3" y="788.5" width="18.6" height="2" fill="#9a9a9a"/>
<rect x="547.7" y="787" width="1.2" height="3" fill="#9a9a9a"/>
<rect x="553.9" y="787" width="1.2" height="3" fill="#9a9a9a"/>
<text x="551.6" y="798.8" fill="#aaa" font-size="9.5" text-anchor="middle">6</text>
<rect x="587.5" y="789.3" width="17.4" height="11" rx="2" ry="2" fill="none" stroke="#9a9a9a" stroke-width="1.3"/>
<rect x="586.9" y="788.5" width="18.6" height="2" fill="#9a9a9a"/>
<rect x="592.3" y="787" width="1.2" height="3" fill="#9a9a9a"/>
<rect x="598.5" y="787" width="1.2" height="3" fill="#9a9a9a"/>
<text x="596.2" y="798.8" fill="#aaa" font-size="9.5" text-anchor="middle">7</text>
<rect x="632.1" y="789.3" width="17.4" height="11" rx="2" ry="2" fill="none" stroke="#9a9a9a" stroke-width="1.3"/>
<rect x="631.5" y="788.5" width="18.6" height="2" fill="#9a9a9a"/>
<rect x="636.9" y="787" width="1.2" height="3" fill="#9a9a9a"/>
<rect x="643.1" y="787" width="1.2" height="3" fill="#9a9a9a"/>
<text x="640.8" y="798.8" fill="#aaa" font-size="9.5" text-anchor="middle">7</text>
<rect x="676.6" y="789.3" width="17.4" height="11" rx="2" ry="2" fill="none" stroke="#9a9a9a" stroke-width="1.3"/>
<rect x="676" y="788.5" width="18.6" height="2" fill="#9a9a9a"/>
<rect x="681.4" y="787" width="1.2" height="3" fill="#9a9a9a"/>
<rect x="687.6" y="787" width="1.2" height="3" fill="#9a9a9a"/>
<text x="685.3" y="798.8" fill="#aaa" font-size="9.5" text-anchor="middle">5</text>
<g opacity="0.55">
<rect x="719.6" y="785.3" width="20.3" height="1.15" fill="#e23b3b"/>
<rect x="719.6" y="787.5" width="20.3" height="1.15" fill="#e23b3b"/>
<rect x="719.6" y="789.8" width="20.3" height="1.15" fill="#e23b3b"/>
<rect x="719.6" y="792" width="20.3" height="1.15" fill="#e23b3b"/>
<rect x="719.6" y="794.2" width="20.3" height="1.15" fill="#e23b3b"/>
<rect x="719.6" y="796.4" width="20.3" height="1.15" fill="#e23b3b"/>
<rect x="719.6" y="798.7" width="20.3" height="1.15" fill="#e23b3b"/>
<rect x="719.6" y="785.3" width="9" height="7.6" fill="#3b5697"/>
</g>
<rect x="765.8" y="789.3" width="17.4" height="11" rx="2" ry="2" fill="none" stroke="#9a9a9a" stroke-width="1.3"/>
<rect x="765.2" y="788.5" width="18.6" height="2" fill="#9a9a9a"/>
<rect x="770.6" y="787" width="1.2" height="3" fill="#9a9a9a"/>
<rect x="776.8" y="787" width="1.2" height="3" fill="#9a9a9a"/>
<text x="774.5" y="798.8" fill="#aaa" font-size="9.5" text-anchor="middle">11</text>
<rect x="810.4" y="789.3" width="17.4" height="11" rx="2" ry="2" fill="none" stroke="#9a9a9a" stroke-width="1.3"/>
<rect x="809.8" y="788.5" width="18.6" height="2" fill="#9a9a9a"/>
<rect x="815.2" y="787" width="1.2" height="3" fill="#9a9a9a"/>
<rect x="821.4" y="787" width="1.2" height="3" fill="#9a9a9a"/>
<text x="819.1" y="798.8" fill="#aaa" font-size="9.5" text-anchor="middle">5</text>
</svg>
</body></html>
